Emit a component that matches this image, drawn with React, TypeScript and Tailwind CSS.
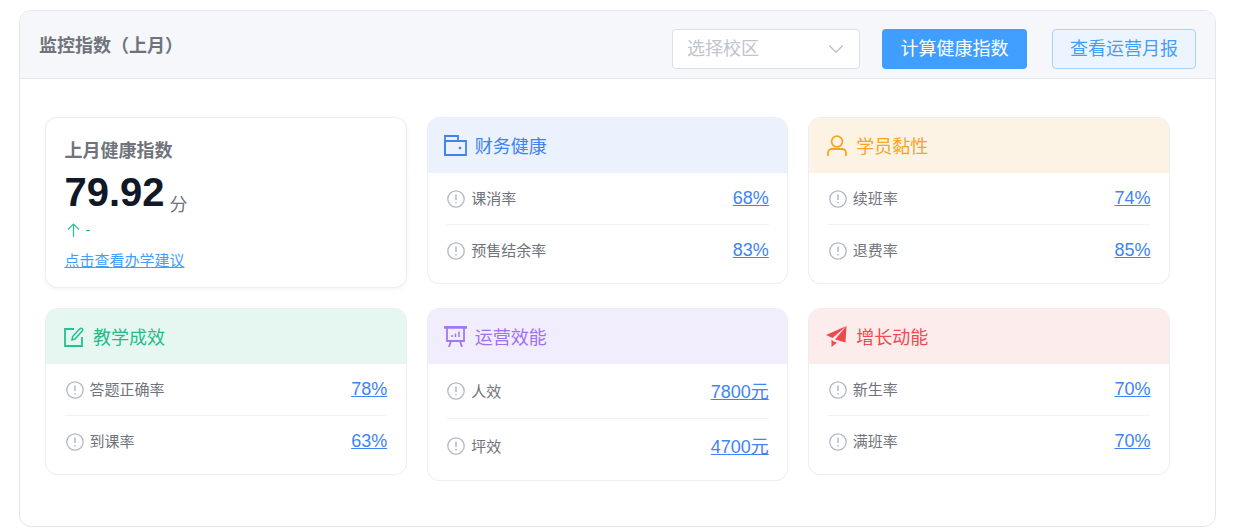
import { ReactNode } from "react";
import { ChevronDown } from "lucide-react";

function InfoIcon() {
  return (
    <svg width="18" height="18" viewBox="0 0 18 18" fill="none" className="shrink-0">
      <circle cx="9" cy="9" r="8.2" stroke="#b3b8c4" strokeWidth="1.3" />
      <path d="M9 4.5v5.6" stroke="#b3b8c4" strokeWidth="1.5" />
      <path d="M9 12v1.6" stroke="#b3b8c4" strokeWidth="1.5" />
    </svg>
  );
}

const WalletIcon = (
  <svg width="23" height="21" viewBox="0 0 23 21" fill="none" stroke="#3f83f0" strokeWidth="1.8">
    <path d="M1 20V1h13v5" />
    <path d="M1 6h21v14H1z" />
    <circle cx="16" cy="13" r="1.3" fill="#3f83f0" stroke="none" />
  </svg>
);

const UserIcon = (
  <svg width="20" height="22" viewBox="0 0 20 22" fill="none" stroke="#f5a623" strokeWidth="1.8">
    <circle cx="10" cy="6.5" r="5.4" />
    <path d="M1 21v-3.5a3.5 3.5 0 0 1 3.5-3.5h11a3.5 3.5 0 0 1 3.5 3.5V21" />
  </svg>
);

const EditIcon = (
  <svg width="20" height="20" viewBox="0 0 20 20" fill="none" stroke="#24c08e" strokeWidth="1.8">
    <path d="M10 2H1v17h17v-9" />
    <path d="M8 13l.6-3.4L16 1.6a1.5 1.5 0 0 1 2.2 0.1 1.6 1.6 0 0 1 0 2.2L11 12z" strokeWidth="1.5" />
  </svg>
);

const BoardIcon = (
  <svg width="23" height="21" viewBox="0 0 23 21" fill="none" stroke="#a277f5" strokeWidth="1.8">
    <path d="M0 1.4h23" strokeWidth="2.6" />
    <path d="M3 2v13h17V2" />
    <path d="M7 15l-2 6M16 15l2 6" />
    <path d="M8 11V9M11.5 11V7.5M15 11V5.5" strokeWidth="1.5" />
  </svg>
);

const PlaneIcon = (
  <svg width="21" height="21" viewBox="0 0 21 21" fill="#f0474c">
    <path d="M20.5 0L0 9l6.5 3z" />
    <path d="M20.5 0L9 13.5l10.5 3z" />
    <path d="M5.5 13.5V21l5.5-4.5-3.5-1z" />
  </svg>
);

type Row = { label: string; value: string };

type CardProps = {
  title: string;
  icon: ReactNode;
  headerClass: string;
  rows: Row[];
  tall?: boolean;
};

function MetricCard({ title, icon, headerClass, rows, tall }: CardProps) {
  return (
    <div className="overflow-hidden rounded-xl border border-[#ebeef5] bg-white">
      <div className={`flex h-[55px] items-center gap-2 pl-4 text-lg ${headerClass}`}>
        <span className="flex w-[23px] justify-center">{icon}</span>
        <span className="mt-[3px]">{title}</span>
      </div>
      <div className="px-[18.5px] pb-[7px]">
        {rows.map((row, i) => (
          <div
            key={row.label}
            className={`flex items-center justify-between py-[15px] ${i === 0 ? "border-b border-[#f2f3f7]" : ""}`}
          >
            <div className="flex items-center gap-1.5 pl-px text-[15px] leading-[21px] text-[#6f737b]">
              <InfoIcon />
              <span>{row.label}</span>
            </div>
            <a
              className={
                tall
                  ? "translate-y-px text-lg leading-[24px] text-[#4083f5] underline"
                  : "text-lg leading-[21px] text-[#4083f5] underline"
              }
            >
              {row.value}
            </a>
          </div>
        ))}
      </div>
    </div>
  );
}

export default function App() {
  return (
    <div className="bg-white pt-2.5 pr-5 pb-1 pl-[19px] font-['Liberation_Sans','Noto_Sans_CJK_SC',sans-serif]">
      <div className="rounded-xl border border-[#e4e7ed] bg-white">
        <div className="flex h-[68px] items-start justify-between rounded-t-xl border-b border-[#e4e7ed] bg-[#f5f7fb] pt-[18px] pr-[19px] pl-[19px]">
          <h2 className="mt-[3px] text-lg font-bold text-[#6f737b]">监控指数（上月）</h2>
          <div className="flex items-center">
            <div className="flex h-10 w-[188px] items-center justify-between rounded border border-[#dcdfe6] bg-white pr-[10px] pl-[14px] text-lg text-[#c0c4cc]">
              <span>选择校区</span>
              <ChevronDown size={26} strokeWidth={1} className="text-[#b8bcc4]" />
            </div>
            <button className="ml-[22px] h-10 w-[145px] rounded bg-[#409eff] text-lg text-white">
              计算健康指数
            </button>
            <button className="ml-[25px] h-10 w-[144px] rounded border border-[#a6d2ff] bg-[#ecf5ff] text-lg text-[#409eff]">
              查看运营月报
            </button>
          </div>
        </div>

        <div className="grid grid-cols-[361.67px_361.67px_361.67px] items-start gap-5 pt-[38px] pb-[45px] pl-[25px]">
          <div className="flex h-[171px] flex-col rounded-xl border border-[#ebeef5] bg-white px-[18.5px] pt-[19px] shadow-[0_1px_4px_rgba(0,0,0,0.05)]">
            <div className="text-lg font-bold text-[#6f737b]">上月健康指数</div>
            <div className="mt-1 flex items-baseline gap-[5px]">
              <span className="text-[40px] leading-[46px] font-bold text-[#111827]">79.92</span>
              <span className="translate-y-[5px] text-lg text-[#6f737b]">分</span>
            </div>
            <div className="mt-[5px] flex items-center gap-1.5 pl-[2px] text-sm text-[#22b884]">
              <svg width="13" height="15" viewBox="0 0 13 15" fill="none" stroke="#2ec48f" strokeWidth="1.2">
                <path d="M6.5 14V1M1 6.5L6.5 1 12 6.5" />
              </svg>
              <span>-</span>
            </div>
            <a className="mt-2.5 text-[15px] text-[#409eff] underline">点击查看办学建议</a>
          </div>

          <MetricCard
            title="财务健康"
            icon={WalletIcon}
            headerClass="bg-[#ebf1fd] text-[#4083f0]"
            rows={[
              { label: "课消率", value: "68%" },
              { label: "预售结余率", value: "83%" },
            ]}
          />
          <MetricCard
            title="学员黏性"
            icon={UserIcon}
            headerClass="bg-[#fdf3e5] text-[#f5a623]"
            rows={[
              { label: "续班率", value: "74%" },
              { label: "退费率", value: "85%" },
            ]}
          />
          <MetricCard
            title="教学成效"
            icon={EditIcon}
            headerClass="bg-[#e6f7f1] text-[#1fbb88]"
            rows={[
              { label: "答题正确率", value: "78%" },
              { label: "到课率", value: "63%" },
            ]}
          />
          <MetricCard
            title="运营效能"
            icon={BoardIcon}
            headerClass="bg-[#f1edfc] text-[#a06ff2]"
            tall
            rows={[
              { label: "人效", value: "7800元" },
              { label: "坪效", value: "4700元" },
            ]}
          />
          <MetricCard
            title="增长动能"
            icon={PlaneIcon}
            headerClass="bg-[#fcecec] text-[#ef4a50]"
            rows={[
              { label: "新生率", value: "70%" },
              { label: "满班率", value: "70%" },
            ]}
          />
        </div>
      </div>
    </div>
  );
}
